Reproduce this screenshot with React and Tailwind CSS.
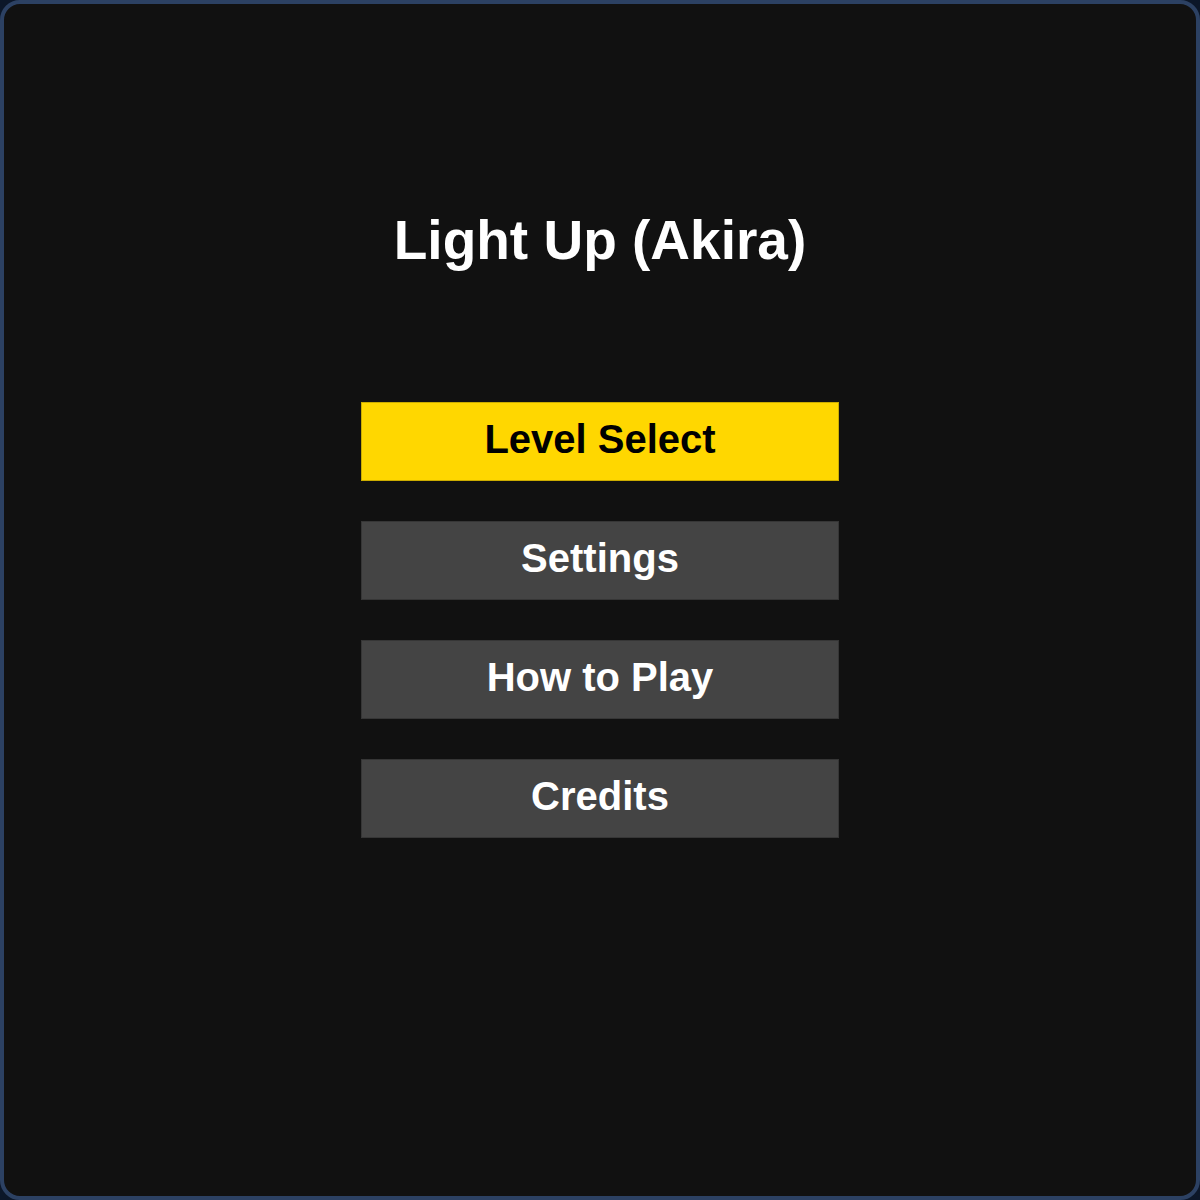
export default function App() {
  const items = [
    { label: 'Level Select', active: true },
    { label: 'Settings' },
    { label: 'How to Play' },
    { label: 'Credits' },
  ];

  return (
    <div className="w-[1200px] h-[1200px] bg-[#0c1729]">
      <div
        className="h-full rounded-[20px] border-4 border-[#2c4163] bg-[#111111] flex flex-col items-center pt-[209px]"
        style={{ fontFamily: '"Liberation Sans", Arial, Helvetica, sans-serif' }}
      >
        <h1 className="text-[55px] leading-none font-bold text-white">Light Up (Akira)</h1>

        <div className="mt-[134px] flex flex-col gap-[40px]">
          {items.map((item) => (
            <button
              key={item.label}
              className={`w-[478px] h-[79px] pb-[6px] border border-black/20 text-[40px] leading-none font-bold ${
                item.active ? 'bg-[#ffd700] text-black' : 'bg-[#444444] text-white'
              }`}
            >
              {item.label}
            </button>
          ))}
        </div>
      </div>
    </div>
  );
}
